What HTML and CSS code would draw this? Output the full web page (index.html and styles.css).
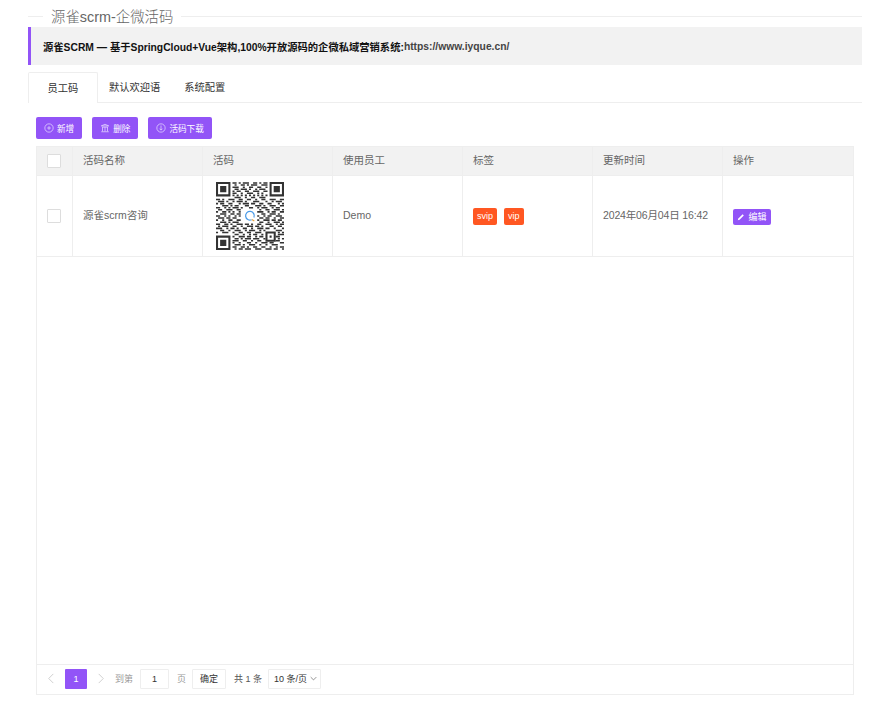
FILE: index.html
```html
<!DOCTYPE html>
<html lang="zh-CN">
<head>
    <meta charset="UTF-8">
    <title>源雀scrm-企微活码</title>
    <link rel="stylesheet" href="styles.css">
</head>
<body>

    <!-- Title -->
    <div class="page-title"><span>源雀scrm-企微活码</span></div>

    <!-- Notice -->
    <div class="notice">源雀SCRM — 基于SpringCloud+Vue架构,100%开放源码的企微私域营销系统:<span class="notice-link">https://www.iyque.cn/</span></div>

    <!-- Tabs -->
    <div class="tabs">
        <div class="tab active">员工码</div>
        <div class="tab">默认欢迎语</div>
        <div class="tab">系统配置</div>
    </div>

    <div class="main">
        <!-- Toolbar -->
        <div class="toolbar">
            <button class="btn">
                <svg class="btn-icon" viewBox="0 0 12 12"><circle cx="6" cy="6" r="5"/><path d="M3.8 6h4.4M6 3.8v4.4"/></svg>新增
            </button>
            <button class="btn">
                <svg class="btn-icon" viewBox="0 0 12 12"><path d="M1.5 3.5L6 1.5l4.5 2zM2.5 5h7M3 5v5M6 5v5M9 5v5M1.5 10.5h9"/></svg>删除
            </button>
            <button class="btn">
                <svg class="btn-icon" viewBox="0 0 12 12"><circle cx="6" cy="6" r="5"/><path d="M6 3v5.4M4.2 6.8L6 8.6l1.8-1.8"/></svg>活码下载
            </button>
        </div>

        <!-- Table -->
        <div class="grid">
            <div class="grid-body">
                <table>
                    <colgroup>
                        <col class="col-check"><col class="col-wide"><col class="col-wide"><col class="col-wide"><col class="col-wide"><col class="col-wide"><col>
                    </colgroup>
                    <thead>
                        <tr>
                            <th class="cell-check"><span class="checkbox"></span></th>
                            <th>活码名称</th>
                            <th>活码</th>
                            <th>使用员工</th>
                            <th>标签</th>
                            <th>更新时间</th>
                            <th class="last">操作</th>
                        </tr>
                    </thead>
                    <tbody>
                        <tr>
                            <td class="cell-check"><span class="checkbox"></span></td>
                            <td>源雀scrm咨询</td>
                            <td class="cell-qr">
                                <svg class="qr" viewBox="0 0 33 33">
                                    <path fill-rule="evenodd" d="M0 0h7v7h-7zM1 1v5h5v-5zM2 2h3v3h-3zM26 0h7v7h-7zM27 1v5h5v-5zM28 2h3v3h-3zM0 26h7v7h-7zM1 27v5h5v-5zM2 28h3v3h-3zM24 24h5v5h-5zM25 25v3h3v-3zM26 26h1v1h-1z"/>
                                    <path class="qr-data" d="M8 .5h2M11 .5h1M13 .5h3M18 .5h2M21 .5h1M23 .5h2
                                    M9 1.5h1M12 1.5h2M15 1.5h1M17 1.5h3M22 1.5h3
                                    M8 2.5h3M13 2.5h1M16 2.5h2M20 2.5h2M24 2.5h1
                                    M9 3.5h2M12 3.5h3M16 3.5h1M19 3.5h1M21 3.5h3
                                    M8 4.5h1M10 4.5h2M14 4.5h2M18 4.5h3M23 4.5h2
                                    M8 5.5h2M12 5.5h1M15 5.5h3M20 5.5h1M22 5.5h1
                                    M8 6.5h1M10 6.5h1M12 6.5h1M14 6.5h1M16 6.5h1M18 6.5h1M20 6.5h1M22 6.5h1M24 6.5h1
                                    M9 7.5h3M14 7.5h1M17 7.5h2M21 7.5h3
                                    M0 8.5h2M3 8.5h1M6 8.5h3M11 8.5h2M15 8.5h2M19 8.5h1M22 8.5h2M26 8.5h3M31 8.5h2
                                    M1 9.5h3M5 9.5h1M8 9.5h1M10 9.5h3M14 9.5h1M18 9.5h3M24 9.5h1M27 9.5h1M29 9.5h3
                                    M0 10.5h1M2 10.5h2M6 10.5h2M11 10.5h1M13 10.5h3M17 10.5h2M21 10.5h2M25 10.5h2M30 10.5h1M32 10.5h1
                                    M3 11.5h3M7 11.5h1M9 11.5h2M14 11.5h2M19 11.5h3M23 11.5h1M26 11.5h3M31 11.5h2
                                    M0 12.5h2M4 12.5h1M6 12.5h1M8 12.5h3M12 12.5h1M16 12.5h2M20 12.5h1M22 12.5h3M27 12.5h1M29 12.5h2
                                    M1 13.5h2M5 13.5h3M10 13.5h2M21 13.5h1M24 13.5h2M28 13.5h3M32 13.5h1
                                    M0 14.5h1M3 14.5h2M6 14.5h1M8 14.5h1M11 14.5h1M20 14.5h3M25 14.5h1M27 14.5h2M31 14.5h2
                                    M2 15.5h3M7 15.5h2M10 15.5h2M22 15.5h2M26 15.5h3M30 15.5h1
                                    M0 16.5h2M4 16.5h1M6 16.5h1M9 16.5h1M11 16.5h1M20 16.5h1M23 16.5h1M25 16.5h2M29 16.5h3
                                    M1 17.5h3M5 17.5h2M8 17.5h2M21 17.5h2M24 17.5h2M28 17.5h1M31 17.5h2
                                    M0 18.5h1M3 18.5h1M6 18.5h2M10 18.5h2M20 18.5h1M23 18.5h3M27 18.5h2M30 18.5h2
                                    M2 19.5h3M6 19.5h1M8 19.5h3M21 19.5h2M25 19.5h1M28 19.5h3M32 19.5h1
                                    M0 20.5h2M4 20.5h2M7 20.5h1M10 20.5h3M14 20.5h2M17 20.5h1M20 20.5h2M24 20.5h3M29 20.5h1M31 20.5h2
                                    M1 21.5h1M3 21.5h3M8 21.5h2M12 21.5h1M15 21.5h3M19 21.5h2M22 21.5h1M26 21.5h2M30 21.5h2
                                    M0 22.5h3M5 22.5h1M7 22.5h2M10 22.5h1M13 22.5h2M17 22.5h1M20 22.5h3M24 22.5h2M28 22.5h1M32 22.5h1
                                    M2 23.5h2M6 23.5h1M9 23.5h3M14 23.5h1M16 23.5h3M21 23.5h1M23 23.5h1M29 23.5h3
                                    M0 24.5h1M3 24.5h3M8 24.5h1M11 24.5h2M15 24.5h2M19 24.5h3M30 24.5h1M32 24.5h1
                                    M9 25.5h2M13 25.5h1M16 25.5h1M18 25.5h2M22 25.5h1M30 25.5h3
                                    M8 26.5h1M11 26.5h3M15 26.5h2M19 26.5h1M21 26.5h2M29 26.5h2
                                    M9 27.5h2M12 27.5h1M14 27.5h3M18 27.5h3M23 27.5h1M30 27.5h1M32 27.5h1
                                    M8 28.5h3M13 28.5h2M17 28.5h1M20 28.5h2M29 28.5h2
                                    M8 29.5h1M11 29.5h1M15 29.5h2M19 29.5h1M22 29.5h3M26 29.5h2M31 29.5h2
                                    M9 30.5h3M13 30.5h1M16 30.5h3M21 30.5h1M24 30.5h1M27 30.5h3
                                    M8 31.5h2M12 31.5h2M15 31.5h1M18 31.5h2M22 31.5h2M26 31.5h1M29 31.5h1M31 31.5h2
                                    M9 32.5h1M11 32.5h2M14 32.5h3M19 32.5h3M24 32.5h3M28 32.5h2M32 32.5h1"/>
                                    <path class="qr-logo" d="M18.4 17.2a2.1 2.1 0 1 0-1.1 1.1"/>
                                    <path class="qr-logo-tail" d="M17.4 18.2l1.2.7"/>
                                </svg>
                            </td>
                            <td class="cell-user">Demo</td>
                            <td class="cell-tags">
                                <span class="tag">svip</span><span class="tag">vip</span>
                            </td>
                            <td class="cell-date">2024年06月04日 16:42</td>
                            <td class="last cell-action">
                                <button class="btn-edit">
                                    <svg class="edit-icon" viewBox="0 0 10 10"><path d="M1 9l.7-2.2L7 1.5l1.5 1.5-5.3 5.3z"/></svg>编辑
                                </button>
                            </td>
                        </tr>
                    </tbody>
                </table>
            </div>

            <!-- Pager -->
            <div class="pager">
                <svg class="chevron" viewBox="0 0 8 12"><path d="M6.5 1L1.5 6l5 5"/></svg>
                <span class="page-current">1</span>
                <svg class="chevron chevron-next" viewBox="0 0 8 12"><path d="M1.5 1l5 5-5 5"/></svg>
                <span class="pager-label label-goto">到第</span>
                <input class="page-input" type="text" value="1">
                <span class="pager-label label-page">页</span>
                <button class="page-ok">确定</button>
                <span class="page-total">共 1 条</span>
                <div class="page-size">10 条/页
                    <svg class="size-arrow" viewBox="0 0 10 6"><path d="M1 1l4 4 4-4"/></svg>
                </div>
            </div>
        </div>
    </div>

</body>
</html>
```

FILE: styles.css
```css
body {
    margin: 0;
    height: 720px;
    overflow: hidden;
    display: flex;
    flex-direction: column;
    font-family: "Liberation Sans", "Noto Sans CJK SC", sans-serif;
    font-size: 10.5px;
    color: #666;
    background-color: #fff;
}

/* Title */
.page-title {
    margin: 8px 26px 0 28px;
    height: 19px;
    display: flex;
    align-items: flex-start;
    font-size: 14.4px;
    line-height: 18px;
    font-weight: 300;
    color: #666;
    background: linear-gradient(#eee, #eee) 0 8px / 100% 1px no-repeat;
}

.page-title span {
    margin-left: 15px;
    padding: 0 8px;
    background-color: #fff;
}

/* Notice */
.notice {
    margin: 0 26px 0 28px;
    height: 38px;
    padding-left: 12px;
    box-sizing: border-box;
    display: flex;
    align-items: center;
    border-left: 3px solid #9254f7;
    background-color: #f2f2f2;
    font-size: 10.3px;
    font-weight: bold;
    color: #111;
}

.notice-link {
    color: #444;
}

/* Tabs */
.tabs {
    margin: 7px 26px 0 28px;
    height: 30px;
    display: flex;
    gap: 2px;
    border-bottom: 1px solid #eee;
    font-size: 10.25px;
}

.tab {
    padding: 0 11px;
    line-height: 31px;
    color: #333;
}

.tab.active {
    width: 70px;
    margin-right: -2px;
    padding: 0;
    box-sizing: border-box;
    height: 31px;
    text-align: center;
    border: 1px solid #eee;
    border-bottom: none;
    border-radius: 2px 2px 0 0;
    background-color: #fff;
}

/* Main */
.main {
    margin: 14px 34px 0 36px;
    flex: 1;
    display: flex;
    flex-direction: column;
    padding-bottom: 25px;
}

.toolbar {
    display: flex;
    gap: 10px;
    margin-bottom: 7px;
}

.btn {
    height: 22px;
    padding: 0 8px;
    display: flex;
    align-items: center;
    gap: 3px;
    border: none;
    border-radius: 2px;
    background-color: #9254f7;
    color: #fff;
    font-family: inherit;
    font-size: 8.6px;
}

.btn-icon {
    width: 10px;
    height: 10px;
    fill: none;
    stroke: #e6d9fd;
    stroke-width: .9;
}

/* Table */
.grid {
    flex: 1;
    display: flex;
    flex-direction: column;
    border: 1px solid #eee;
}

.grid-body {
    flex: 1;
}

table {
    width: 100%;
    table-layout: fixed;
    border-collapse: collapse;
}

.col-check {
    width: 35px;
}

.col-wide {
    width: 130px;
}

th, td {
    box-sizing: border-box;
    padding: 0 10px 3px 10.5px;
    text-align: left;
    font-weight: normal;
    border-right: 1px solid #eee;
    border-bottom: 1px solid #eee;
}

.last {
    border-right: none;
}

th {
    height: 28px;
    background-color: #f2f2f2;
}

td {
    height: 81px;
}

th.cell-check, td.cell-check {
    padding: 0;
    text-align: center;
}

td.cell-qr {
    padding-bottom: 0;
}

td.cell-user {
    padding-bottom: 1px;
}

td.cell-tags, td.cell-action {
    padding-top: 2px;
    padding-bottom: 0;
}

.cell-date {
    letter-spacing: -.15px;
}

.checkbox {
    display: inline-block;
    box-sizing: border-box;
    width: 14px;
    height: 14px;
    vertical-align: middle;
    border: 1px solid #ddd;
    border-radius: 1px;
    background-color: #fff;
}

.qr {
    display: block;
    width: 68px;
    height: 68px;
    margin-left: 2.5px;
    fill: #333;
}

.qr-data {
    fill: none;
    stroke: #333;
    stroke-width: .75;
}

.qr-logo, .qr-logo-tail {
    fill: none;
    stroke-width: .6;
}

.qr-logo {
    stroke: #4a9be8;
}

.qr-logo-tail {
    stroke: #e8a13c;
}

.tag {
    display: inline-block;
    height: 17px;
    line-height: 16px;
    padding: 0 4px;
    margin-right: 7px;
    border-radius: 2px;
    background-color: #ff5722;
    color: #fff;
    font-size: 9px;
}

.btn-edit {
    height: 16px;
    width: 38px;
    padding: 0;
    display: flex;
    align-items: center;
    justify-content: center;
    gap: 3px;
    border: none;
    border-radius: 2px;
    background-color: #9254f7;
    color: #fff;
    font-family: inherit;
    font-size: 9px;
}

.edit-icon {
    width: 8px;
    height: 8px;
    fill: #fff;
}

/* Pager */
.pager {
    height: 27px;
    padding: 0 0 2px 10px;
    display: flex;
    align-items: center;
    border-top: 1px solid #eee;
    font-size: 9px;
}

.chevron {
    width: 8px;
    height: 11px;
    fill: none;
    stroke: #ccc;
    stroke-width: 1;
}

.page-current {
    width: 22px;
    height: 20px;
    margin-left: 10px;
    line-height: 20px;
    text-align: center;
    border-radius: 1px;
    background-color: #9254f7;
    color: #fff;
}

.chevron-next {
    margin-left: 10px;
}

.pager-label {
    color: #999;
}

.label-goto {
    margin-left: 10px;
}

.page-input {
    box-sizing: border-box;
    width: 29px;
    height: 20px;
    margin-left: 7px;
    padding: 0;
    text-align: center;
    border: 1px solid #eee;
    border-radius: 1px;
    font-family: inherit;
    font-size: 9px;
    color: #333;
}

.label-page {
    margin-left: 8px;
}

.page-ok {
    box-sizing: border-box;
    width: 34px;
    height: 20px;
    margin-left: 6px;
    padding: 0;
    border: 1px solid #eee;
    border-radius: 1px;
    background-color: #fff;
    font-family: inherit;
    font-size: 9px;
    color: #333;
}

.page-total {
    margin-left: 8px;
    color: #555;
}

.page-size {
    box-sizing: border-box;
    width: 53px;
    height: 20px;
    margin-left: 6px;
    padding-left: 5px;
    display: flex;
    align-items: center;
    justify-content: space-between;
    padding-right: 3px;
    border: 1px solid #eee;
    border-radius: 1px;
    color: #333;
}

.size-arrow {
    width: 7px;
    height: 5px;
    fill: none;
    stroke: #666;
    stroke-width: 1;
}
```
